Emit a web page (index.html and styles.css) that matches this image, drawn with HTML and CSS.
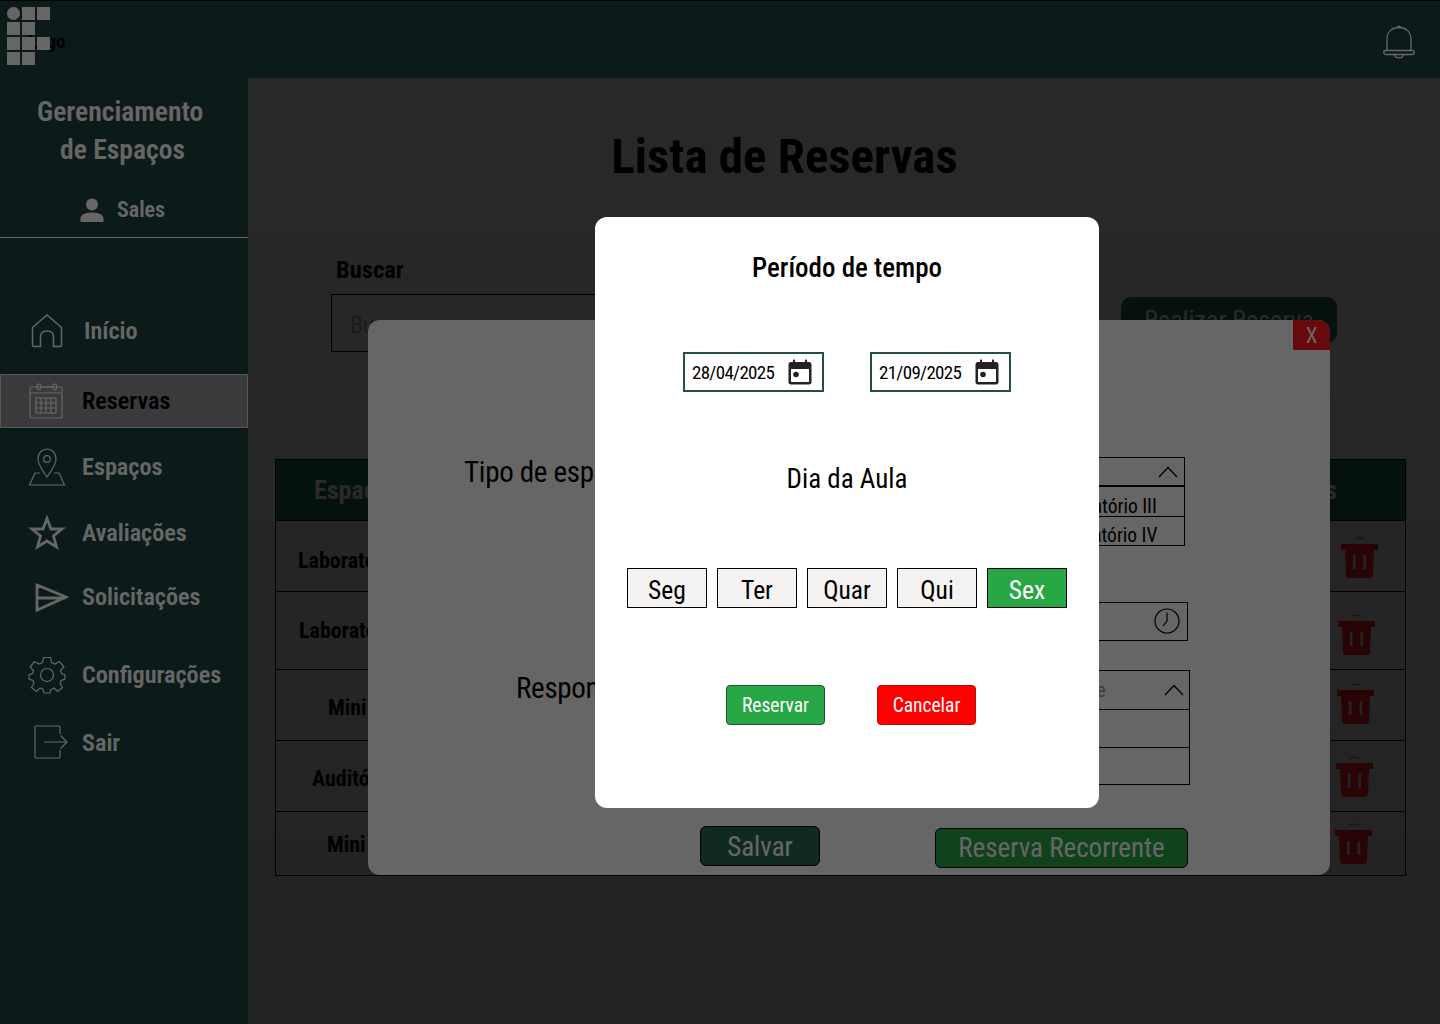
FILE: index.html
```html
<!DOCTYPE html>
<html lang="pt-BR">
<head>
    <meta charset="UTF-8">
    <meta name="viewport" content="width=device-width, initial-scale=1.0">
    <title>Lista de Reservas</title>
    <link rel="stylesheet" href="styles.css">
</head>
<body>
    <div class="app">
        <!-- Topo -->
        <header class="topbar">
            <span class="logo-text">Logo</span>
            <svg class="logo" viewBox="0 0 44 59" width="44" height="59">
                <circle cx="6.5" cy="6.5" r="6.5"/>
                <rect x="15" y="0" width="13" height="13"/>
                <rect x="30" y="0" width="13" height="13"/>
                <rect x="0" y="15" width="13" height="13"/>
                <rect x="15" y="15" width="13" height="13"/>
                <rect x="0" y="30" width="13" height="13"/>
                <rect x="15" y="30" width="13" height="13"/>
                <rect x="30" y="30" width="13" height="13"/>
                <rect x="0" y="45" width="13" height="13"/>
                <rect x="15" y="45" width="13" height="13"/>
            </svg>
            <svg class="bell" viewBox="0 0 32 34" width="32" height="34">
                <path d="M4 26 V14 C4 7 9 2.500 16 2.500 C23 2.500 28 7 28 14 V26"/>
                <path d="M14.500 2.500 C14.500 0.800 17.500 0.800 17.500 2.500"/>
                <rect x="0.700" y="25.500" width="30.600" height="4" rx="2"/>
                <path d="M11.500 29.500 C12 34 20 34 20.500 29.500"/>
            </svg>
        </header>

        <!-- Menu lateral -->
        <aside class="sidebar">
            <div class="sidebar-title">
                <div>Gerenciamento</div>
                <div class="title-second">de Espaços</div>
            </div>
            <div class="user">
                <svg viewBox="0 0 24 24" width="24" height="24">
                    <circle cx="12" cy="6.500" r="6"/>
                    <path d="M0.500 24 V20.500 C0.500 16 7 14.500 12 14.500 C17 14.500 23.500 16 23.500 20.500 V24 Z"/>
                </svg>
                <span>Sales</span>
            </div>
            <nav class="nav">
                <a class="nav-item nav-home">
                    <svg class="icon icon-home" viewBox="0 0 36 36" width="36" height="36">
                        <path d="M3.500 32 V14.500 L18 2 L32.500 14.500 V32 C32.500 33 32 33.500 31 33.500 H24.500 V24 C24.500 20 22 18 18 18 C14 18 11.500 20 11.500 24 V33.500 H5 C4 33.500 3.500 33 3.500 32 Z"/>
                    </svg>
                    Início
                </a>
                <a class="nav-item active">
                    <svg class="icon" viewBox="0 0 36 36" width="36" height="36">
                        <rect x="2" y="4" width="32" height="31" rx="1"/>
                        <path d="M2 10 H34 M13 4 H25"/>
                        <rect x="9" y="1" width="3.500" height="6" rx="1.700"/>
                        <rect x="25" y="1" width="3.500" height="6" rx="1.700"/>
                        <rect x="8" y="15" width="20" height="15"/>
                        <path d="M13 15 V30 M18 15 V30 M23 15 V30 M8 20 H28 M8 25 H28"/>
                    </svg>
                    Reservas
                </a>
                <a class="nav-item nav-wide">
                    <svg class="icon" viewBox="0 0 38 38" width="38" height="38">
                        <path d="M19 29 C15 23 10 17 10 11 C10 5 14 1 19 1 C24 1 28 5 28 11 C28 17 23 23 19 29 Z"/>
                        <circle cx="19" cy="11" r="3.300"/>
                        <path d="M12 25 H7 L1.500 37 H36.500 L31 25 H26"/>
                    </svg>
                    Espaços
                </a>
                <a class="nav-item">
                    <svg class="icon icon-bold" viewBox="-1 0 36 36" width="36" height="36">
                        <path d="M18 3.500 L22 14 H33 L24.500 21 L27.500 32 L18 26 L8.500 32 L11.500 21 L3 14 H14 Z"/>
                    </svg>
                    Avaliações
                </a>
                <a class="nav-item">
                    <svg class="icon icon-bold" viewBox="-4 0 36 36" width="36" height="36">
                        <path d="M5 6 L34 18 L5 31 Z M5 19 H34"/>
                    </svg>
                    Solicitações
                </a>
                <a class="nav-item nav-wide">
                    <svg class="icon" viewBox="0 0 38 38" width="38" height="38">
                        <circle cx="19" cy="19" r="6.500"/>
                        <path d="M15.500 1.500 H22.500 L23.500 6.500 L27 8 L31.500 5.500 L36 11 L32.500 14.500 L33.500 17.500 L37 19 V23 L33 24.500 L32 27.500 L34.500 31.500 L29.500 35.500 L26 32 L23 33.500 L22 37 H16 L15 33.500 L12 32 L8.500 35.500 L3.500 31.500 L6 27.500 L5 24.500 L1 23 V19 L4.500 17.500 L5.500 14.500 L2 11 L6.500 5.500 L11 8 L14.500 6.500 Z"/>
                    </svg>
                    Configurações
                </a>
                <a class="nav-item">
                    <svg class="icon" viewBox="-5 0 36 36" width="36" height="36">
                        <path d="M27 9 V2 C27 1.500 26.500 1 26 1 H3 C2.500 1 2 1.500 2 2 V32 C2 32.500 2.500 33 3 33 H26 C26.500 33 27 32.500 27 32 V25"/>
                        <path d="M11 17 H34 M27.500 10.500 L34 17 L27.500 23.500"/>
                    </svg>
                    Sair
                </a>
            </nav>
        </aside>

        <!-- Lista de reservas -->
        <main class="main">
            <h1>Lista de Reservas</h1>
            <label class="search-label" for="busca">Buscar</label>
            <div class="search-row">
                <div class="search-input" id="busca">Buscar reserva</div>
                <button class="new-button">Realizar Reserva</button>
            </div>
            <div class="table">
                <div class="table-head">
                    <span class="col-head">Espaço</span>
                    <span class="col-actions">Ações</span>
                </div>
                <div class="table-row"><span class="col-space">Laboratório I</span><svg class="trash"><use href="#trash"/></svg></div>
                <div class="table-row"><span class="col-space">Laboratório II</span><svg class="trash"><use href="#trash"/></svg></div>
                <div class="table-row"><span class="col-space">Mini Auditório</span><svg class="trash"><use href="#trash"/></svg></div>
                <div class="table-row"><span class="col-space">Auditório</span><svg class="trash"><use href="#trash"/></svg></div>
                <div class="table-row"><span class="col-space">Mini Auditório</span><svg class="trash"><use href="#trash"/></svg></div>
            </div>
        </main>
    </div>

    <svg class="defs" width="0" height="0">
        <symbol id="trash" viewBox="0 0 37 43">
            <path d="M13 5 C14 1.500 23 1.500 24 5 L22.500 4.500 C20 3 17 3 14.500 4.500 Z"/>
            <path fill-rule="evenodd" d="M0 9 H37 V15 H33 L32 40 C32 41.500 31 43 29 43 H8 C6 43 5 41.500 5 40 L4 15 H0 Z M12 20 V34 H14.500 V20 Z M22.500 20 V34 H25 V20 Z"/>
        </symbol>
    </svg>

    <!-- Primeira camada: fundo + modal de reserva -->
    <div class="overlay overlay-base"></div>
    <div class="modal-reserva">
        <button class="close-button">X</button>
        <div class="form-row row-tipo">
            <span class="form-label">Tipo de espaço</span>
            <div class="dropdown dropdown-tipo">
                <div class="dropdown-head">
                    <svg class="chevron" viewBox="0 0 20 12" width="20" height="12"><path d="M1 11 L10 1.500 L19 11"/></svg>
                </div>
                <div class="dropdown-option first">Laboratório III</div>
                <div class="dropdown-option">Laboratório IV</div>
            </div>
        </div>
        <div class="form-row row-hora">
            <div class="time-input">
                <svg viewBox="0 0 26 26" width="26" height="26">
                    <circle cx="13" cy="13" r="12"/>
                    <path d="M13 4.500 V13 L9 18"/>
                </svg>
            </div>
        </div>
        <div class="form-row row-responsavel">
            <span class="form-label">Responsável</span>
            <div class="dropdown dropdown-resp">
                <div class="dropdown-head resp-head">
                    <span>Selecione</span>
                    <svg class="chevron" viewBox="0 0 20 12" width="20" height="12"><path d="M1 11 L10 1.500 L19 11"/></svg>
                </div>
                <div class="dropdown-option resp-option"></div>
                <div class="dropdown-option resp-option"></div>
            </div>
        </div>
        <div class="form-actions">
            <button class="save-button">Salvar</button>
            <button class="recurring-button">Reserva Recorrente</button>
        </div>
    </div>

    <!-- Segunda camada: período de tempo -->
    <div class="overlay overlay-top"></div>
    <div class="modal-periodo">
        <h2>Período de tempo</h2>
        <div class="dates">
            <div class="date-input">
                28/04/2025
                <svg viewBox="0 0 24 26" width="24" height="26"><use href="#cal"/></svg>
            </div>
            <div class="date-input">
                21/09/2025
                <svg viewBox="0 0 24 26" width="24" height="26"><use href="#cal"/></svg>
            </div>
        </div>
        <h3>Dia da Aula</h3>
        <div class="days">
            <button class="day">Seg</button>
            <button class="day">Ter</button>
            <button class="day">Quar</button>
            <button class="day">Qui</button>
            <button class="day selected">Sex</button>
        </div>
        <div class="period-actions">
            <button class="confirm">Reservar</button>
            <button class="cancel">Cancelar</button>
        </div>
    </div>

    <svg class="defs" width="0" height="0">
        <symbol id="cal" viewBox="0 0 24 26">
            <path fill-rule="evenodd" d="M5 1 C5 0.400 7 0.400 7 1 V3 H17 V1 C17 0.400 19 0.400 19 1 V3 H21 C22.500 3 23.500 4 23.500 5.500 V23 C23.500 24.500 22.500 25.500 21 25.500 H3 C1.500 25.500 0.500 24.500 0.500 23 V5.500 C0.500 4 1.500 3 3 3 H5 Z M3 10 V23 H21 V10 Z"/>
            <circle cx="8" cy="15.500" r="2.800"/>
        </symbol>
    </svg>
</body>
</html>
```

FILE: styles.css
```css
/* Reset básico */
body, h1, h2, h3 {
    margin: 0;
    padding: 0;
}

* {
    box-sizing: border-box;
}

body {
    height: 1024px;
    overflow: hidden;
    font-family: Roboto, "Liberation Sans", Arial, sans-serif;
    font-stretch: 75%;
    color: #000000;
}

button {
    font-family: inherit;
    font-stretch: inherit;
    cursor: pointer;
}

.defs {
    position: absolute;
}

.app {
    display: grid;
    grid-template-columns: 248px 1fr;
    grid-template-rows: 78px 1fr;
    height: 1024px;
}

/* Topo */
.topbar {
    grid-column: 1 / 3;
    position: relative;
    z-index: 20;
    display: flex;
    align-items: center;
    justify-content: flex-end;
    padding-right: 25px;
    background-color: #204441;
    border-top: 1px solid #000000;
}

.logo {
    position: absolute;
    left: 7px;
    top: 6px;
    fill: #ffffff;
}

.logo-text {
    position: absolute;
    left: 28px;
    top: 29px;
    font-size: 19px;
    font-weight: bold;
}

.bell {
    margin-top: 5px;
    fill: none;
    stroke: #ffffff;
    stroke-width: 1.300;
}

/* Menu lateral */
.sidebar {
    position: relative;
    z-index: 20;
    background-color: #204441;
    color: #ffffff;
}

.sidebar-title {
    padding-top: 15px;
    padding-left: 37px;
    font-size: 27.600px;
    font-weight: 600;
    line-height: 38px;
}

.title-second {
    padding-left: 23px;
}

.user {
    display: flex;
    align-items: center;
    gap: 13px;
    height: 69px;
    padding-left: 80px;
    padding-top: 13px;
    font-size: 22px;
    font-weight: 600;
    border-bottom: 1px solid #ffffff;
}

.user svg {
    fill: #ffffff;
}

.nav {
    display: flex;
    flex-direction: column;
    padding-top: 66px;
}

.nav-item {
    display: flex;
    align-items: center;
    gap: 18px;
    height: 54px;
    padding-left: 28px;
    font-size: 24.200px;
    font-weight: 600;
}

.nav-item:nth-child(2) { margin-top: 16px; }
.nav-item:nth-child(3) { margin-top: 12px; }
.nav-item:nth-child(4) { margin-top: 12px; }
.nav-item:nth-child(5) { margin-top: 10px; }
.nav-item:nth-child(6) { margin-top: 24px; }
.nav-item:nth-child(7) { margin-top: 14px; }

.nav-home {
    gap: 19px;
    padding-left: 29px;
}

.nav-wide {
    gap: 16px;
}

.nav-item.active {
    padding-left: 27px;
    background-color: #919198;
    border: 1px solid #dddddd;
    color: #000000;
}

.icon {
    flex-shrink: 0;
    overflow: visible;
    fill: none;
    stroke: #ffffff;
    stroke-width: 1.200;
}

.icon-home {
    stroke-width: 1.500;
}

.icon-bold {
    stroke-width: 2.800;
}

/* Conteúdo */
.main {
    position: relative;
    padding: 50px 34px 0 27px;
    background: linear-gradient(#ffffff, #d8d8d8);
}

h1 {
    padding-right: 112px;
    font-size: 49px;
    line-height: 58px;
    text-align: center;
}

.search-label {
    display: block;
    margin: 69px 0 9px 61px;
    font-size: 24.500px;
    font-weight: bold;
    line-height: 30px;
}

.search-row {
    display: flex;
    align-items: flex-start;
    margin-left: 56px;
}

.search-input {
    width: 720px;
    height: 58px;
    padding: 16px 18px;
    border: 1px solid #000000;
    font-size: 24px;
    color: #aaaaaa;
}

.new-button {
    width: 216px;
    height: 46px;
    margin: 3px 0 0 70px;
    background-color: #256f60;
    border: none;
    border-radius: 10px;
    color: #ffffff;
    font-size: 26px;
}

.table {
    display: grid;
    grid-template-rows: 60px 71px 78px 71px 71px 64px;
    margin-top: 107px;
    border: 1px solid #000000;
}

.table-head,
.table-row {
    display: flex;
    align-items: center;
    justify-content: space-between;
}

.table-head {
    background-color: #256f60;
    color: #ffffff;
    font-size: 26px;
    font-weight: bold;
}

.table-row {
    border-top: 1px solid #000000;
    font-size: 22px;
    font-weight: bold;
}

.col-head {
    padding-left: 38px;
}

.col-space {
    white-space: nowrap;
}

.table-row:nth-child(2) .col-space { margin: 8px 0 0 22px; }
.table-row:nth-child(3) .col-space { margin: 0 0 0 23px; }
.table-row:nth-child(4) .col-space { margin: 4px 0 0 52px; }
.table-row:nth-child(5) .col-space { margin: 4px 0 0 36px; }
.table-row:nth-child(6) .col-space { margin: 2px 0 0 51px; }

.col-actions {
    padding-right: 68px;
}

.trash {
    width: 37px;
    height: 43px;
    fill: #ff1e1e;
}

.table-row:nth-child(2) .trash { margin: 0 27px 0 0; }
.table-row:nth-child(3) .trash { margin: 6px 30px 0 0; }
.table-row:nth-child(4) .trash { margin: -6px 31px 0 0; }
.table-row:nth-child(5) .trash { margin: -2px 32px 0 0; }
.table-row:nth-child(6) .trash { margin: -2px 33px 0 0; }

/* Camadas */
.overlay {
    position: fixed;
    top: 0;
    right: 0;
    bottom: 0;
    left: 0;
    background-color: rgba(0, 0, 0, 0.6);
}

.overlay-base { z-index: 10; }
.overlay-top { z-index: 40; }

/* Modal de reserva */
.modal-reserva {
    position: fixed;
    z-index: 30;
    left: 368px;
    top: 320px;
    width: 962px;
    height: 555px;
    padding-top: 137px;
    background-color: #ffffff;
    border-radius: 12px;
}

.close-button {
    position: absolute;
    top: 0;
    right: 0;
    width: 37px;
    height: 30px;
    padding-top: 2px;
    background-color: #ff1a1f;
    border: none;
    border-top-right-radius: 12px;
    color: #ffffff;
    font-size: 22px;
}

.form-row {
    display: flex;
    justify-content: space-between;
    align-items: flex-start;
}

.form-label {
    font-size: 29px;
    letter-spacing: -0.300px;
}

.row-tipo {
    padding: 0 145px 0 96px;
}

.row-tipo .form-label {
    line-height: 30px;
}

.row-hora {
    justify-content: flex-end;
    margin-top: 56px;
    padding-right: 142px;
}

.row-responsavel {
    margin-top: 29px;
    padding: 0 140px 0 148px;
}

.row-responsavel .form-label {
    line-height: 36px;
}

.dropdown {
    border: 1px solid #000000;
}

.dropdown-tipo {
    width: 160px;
    height: 89px;
}

.dropdown-resp {
    width: 260px;
    height: 115px;
}

.dropdown-head {
    display: flex;
    align-items: center;
    justify-content: flex-end;
    height: 29px;
    padding-right: 6px;
    border-bottom: 2px solid #000000;
}

.chevron {
    flex-shrink: 0;
    fill: none;
    stroke: #000000;
    stroke-width: 1.300;
}

.dropdown-option {
    height: 29px;
    padding: 4px 4px 0 0;
    border-top: 1px solid #000000;
    font-size: 19.500px;
    line-height: 30px;
    text-align: center;
}

.dropdown-option.first {
    border-top: none;
    padding-top: 5px;
}

.resp-head {
    justify-content: space-between;
    height: 38px;
    padding: 0 5px 0 98px;
    border-bottom: none;
    font-size: 20px;
    color: #999999;
}

.resp-option {
    height: 38px;
}

.time-input {
    display: flex;
    align-items: center;
    justify-content: flex-end;
    width: 160px;
    height: 39px;
    padding: 0 7px 2px 0;
    border: 1px solid #000000;
}

.time-input svg {
    fill: none;
    stroke: #000000;
    stroke-width: 1.200;
}

.form-actions {
    display: flex;
    align-items: flex-start;
    gap: 115px;
    margin-top: 41px;
    padding-left: 332px;
}

.save-button,
.recurring-button {
    height: 40px;
    border: 1px solid #000000;
    border-radius: 6px;
    color: #ffffff;
    font-size: 27px;
    white-space: nowrap;
}

.save-button {
    width: 120px;
    padding-top: 2px;
    background-color: #2c6a54;
}

.recurring-button {
    width: 253px;
    margin-top: 2px;
    background-color: #28a745;
}

/* Modal período de tempo */
.modal-periodo {
    position: fixed;
    z-index: 50;
    left: 595px;
    top: 217px;
    width: 504px;
    height: 591px;
    padding-top: 33px;
    background-color: #ffffff;
    border-radius: 12px;
    text-align: center;
}

h2 {
    font-size: 27px;
    font-weight: 500;
    line-height: 36px;
}

h3 {
    margin-top: 69px;
    font-size: 27px;
    font-weight: normal;
    line-height: 36px;
}

.dates {
    display: flex;
    gap: 46px;
    margin: 66px 0 0 88px;
}

.date-input {
    display: flex;
    align-items: center;
    justify-content: space-between;
    width: 141px;
    height: 40px;
    padding: 0 10px 0 7px;
    border: 2px solid #24503f;
    font-size: 19px;
    letter-spacing: -0.700px;
}

.date-input svg {
    flex-shrink: 0;
    fill: #222226;
}

.days {
    display: flex;
    gap: 10px;
    margin: 71px 0 0 32px;
}

.day {
    width: 80px;
    height: 40px;
    padding: 3px 0 0;
    background-color: #f5f2f2;
    border: 1px solid #000000;
    color: #000000;
    font-size: 25.500px;
}

.day.selected {
    background-color: #28a745;
    color: #ffffff;
}

.period-actions {
    display: flex;
    gap: 52px;
    margin: 77px 0 0 131px;
}

.period-actions button {
    width: 99px;
    height: 40px;
    padding: 0;
    border-radius: 4px;
    color: #ffffff;
    font-size: 19.500px;
}

.confirm {
    background-color: #28a745;
    border: 1px solid #24503f;
}

.cancel {
    background-color: #ff0000;
    border: 1px solid #b01010;
}
```
